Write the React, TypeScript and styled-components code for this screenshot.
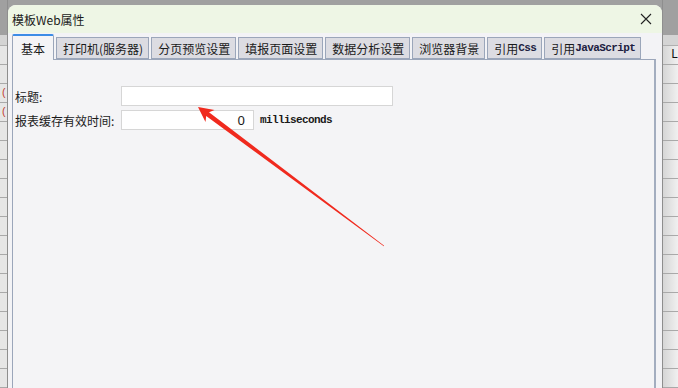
import React from "react";
import styled, { createGlobalStyle } from "styled-components";

//  Global
const GlobalStyle = createGlobalStyle`
  html, body {
    margin: 0;
    padding: 0;
    background: #a0a0a0;
  }
  body {
    font-family: "Noto Sans CJK SC", "Noto Sans", sans-serif;
    font-size: 12px;
    color: #1a1a1a;
  }
`;

const CJK = `"Noto Sans CJK SC", "Noto Sans", sans-serif`;
const MONO = `"Liberation Mono", "Noto Sans CJK SC", monospace`;

//  Styles
const Screen = styled.div`
  position: relative;
  display: grid;
  grid-template-columns: 8px 654px 1fr;
  width: 678px;
  height: 388px;
  overflow: hidden;
`;

const Sheet = styled.div<{ $side: "left" | "right" }>`
  display: flex;
  flex-direction: column;
  border-${(p) => (p.$side === "left" ? "right" : "left")}: 1px solid #8e8e8e;
`;

const SheetTop = styled.div`
  height: 35px;
  background: #a0a0a0;
  flex: none;
`;

const SheetHead = styled.div`
  height: 10px;
  background: #d4d4d4;
  border-bottom: 1px solid #b0b0b0;
  flex: none;
`;

const SheetRow = styled.div<{ $side: "left" | "right" }>`
  height: 18px;
  flex: none;
  border-bottom: 1px solid #a9a9a9;
  background: ${(p) =>
    p.$side === "left" ? "#e6e6e6" : "linear-gradient(to right, #d6d6d6, #f0f0f0)"};
  font-family: ${MONO};
  font-size: 12px;
  line-height: 18px;
  overflow: hidden;
  white-space: nowrap;
  padding-left: ${(p) => (p.$side === "left" ? "1px" : "8px")};
  color: #111;
`;

const Paren = styled.span`
  color: #c0392b;
  font-size: 10px;
`;

const Dialog = styled.div`
  margin-top: 5px;
  background: #f3f3f6;
  border-radius: 8px 8px 0 0;
  display: flex;
  flex-direction: column;
  overflow: hidden;
`;

const TitleBar = styled.div`
  height: 28px;
  background: #eef6e5;
  display: flex;
  align-items: center;
  justify-content: space-between;
  padding: 0 6px 0 4px;
  font-size: 12px;
`;

const CloseBox = styled.div`
  width: 20px;
  height: 20px;
  display: flex;
  align-items: center;
  justify-content: center;
`;

const TabStrip = styled.div`
  display: flex;
  align-items: flex-end;
  gap: 2px;
  height: 25px;
  margin-top: 1px;
  padding-left: 4px;
`;

const Tab = styled.div<{ $active?: boolean }>`
  box-sizing: border-box;
  height: ${(p) => (p.$active ? "26px" : "22px")};
  margin-bottom: ${(p) => (p.$active ? "-1px" : "0")};
  padding: 0 ${(p) => (p.$active ? "8px" : "5px")} 0 ${(p) => (p.$active ? "8px" : "6px")};
  display: flex;
  align-items: center;
  font-family: ${CJK};
  font-size: 12px;
  white-space: nowrap;
  background: ${(p) => (p.$active ? "#f4f4f6" : "#dcdce2")};
  border: 1px solid #9ba6ba;
  border-bottom: ${(p) => (p.$active ? "none" : "1px solid #9ba6ba")};
  border-top: ${(p) => (p.$active ? "2px solid #3c8ce6" : "1px solid #9ba6ba")};
  border-radius: ${(p) => (p.$active ? "2px 2px 0 0" : "0")};
  position: relative;
  z-index: ${(p) => (p.$active ? 2 : 1)};
`;

const Mono = styled.span`
  font-family: ${MONO};
  font-size: 11px;
  letter-spacing: -0.6px;
  font-weight: bold;
  color: #202040;
`;

const Panel = styled.div`
  flex: 1;
  margin: 0 6px 0 4px;
  background: #f4f4f6;
  border: 1px solid #9ba6ba;
  border-right: 2px solid #a3adbf;
  border-bottom: none;
  padding: 26px 0 0 2px;
  display: flex;
  flex-direction: column;
  gap: 4px;
`;

const FieldRow = styled.div`
  display: flex;
  align-items: center;
  height: 20px;
`;

const Label = styled.label`
  width: 106px;
  flex: none;
  font-family: ${CJK};
  font-size: 12px;
  color: #1a1a1a;
`;

const Input = styled.div<{ $width: number; $align?: "left" | "right" }>`
  box-sizing: border-box;
  width: ${(p) => p.$width}px;
  height: 20px;
  background: #ffffff;
  border: 1px solid #d6d6d6;
  font-family: "Noto Sans", sans-serif;
  font-size: 13px;
  line-height: 18px;
  text-align: ${(p) => p.$align || "left"};
  padding: 0 8px 0 4px;
  flex: none;
`;

const Unit = styled.span`
  margin-left: 6px;
  font-family: ${MONO};
  font-size: 11px;
  letter-spacing: -0.6px;
  font-weight: bold;
  color: #1a1a1a;
`;

const Overlay = styled.svg`
  position: absolute;
  left: 0;
  top: 0;
  pointer-events: none;
`;

//  Arrow annotation
const arrowPoints = () => {
  const tip = { x: 198, y: 107 };
  const tail = { x: 384, y: 246 };
  const dx = tail.x - tip.x;
  const dy = tail.y - tip.y;
  const len = Math.hypot(dx, dy);
  const ux = dx / len;
  const uy = dy / len;
  const nx = -uy;
  const ny = ux;
  const at = (d: number, w: number) =>
    `${(tip.x + ux * d + nx * w).toFixed(1)},${(tip.y + uy * d + ny * w).toFixed(1)}`;
  return [
    at(0, 0),
    at(15, 7.5),
    at(12, 2.4),
    at(len, 0.3),
    at(len, -0.3),
    at(12, -2.4),
    at(15, -7.5),
  ].join(" ");
};

const tabs: React.ReactNode[] = [
  "打印机(服务器)",
  "分页预览设置",
  "填报页面设置",
  "数据分析设置",
  "浏览器背景",
  <>
    引用<Mono>Css</Mono>
  </>,
  <>
    引用<Mono>JavaScript</Mono>
  </>,
];

const rows = Array.from({ length: 18 });

const App = () => {
  return (
    <>
      <GlobalStyle />
      <Screen>
        <Sheet $side="left">
          <SheetTop />
          <SheetHead />
          {rows.map((_, i) => (
            <SheetRow key={i} $side="left">
              {i === 2 || i === 3 ? <Paren>(</Paren> : null}
            </SheetRow>
          ))}
        </Sheet>

        <Dialog>
          <TitleBar>
            <span>模板Web属性</span>
            <CloseBox>
              <svg width="12" height="12" viewBox="0 0 12 12">
                <path d="M1 1 L11 11 M11 1 L1 11" stroke="#222" strokeWidth="1.1" />
              </svg>
            </CloseBox>
          </TitleBar>
          <TabStrip>
            <Tab $active>基本</Tab>
            {tabs.map((t, i) => (
              <Tab key={i}>{t}</Tab>
            ))}
          </TabStrip>
          <Panel>
            <FieldRow>
              <Label>标题:</Label>
              <Input $width={272} />
            </FieldRow>
            <FieldRow>
              <Label>报表缓存有效时间:</Label>
              <Input $width={133} $align="right">
                0
              </Input>
              <Unit>milliseconds</Unit>
            </FieldRow>
          </Panel>
        </Dialog>

        <Sheet $side="right">
          <SheetTop />
          <SheetHead />
          {rows.map((_, i) => (
            <SheetRow key={i} $side="right">
              {i === 0 ? "L" : ""}
            </SheetRow>
          ))}
        </Sheet>

        <Overlay width="678" height="388" viewBox="0 0 678 388">
          <polygon points={arrowPoints()} fill="#f02a1e" />
        </Overlay>
      </Screen>
    </>
  );
};

export default App;
